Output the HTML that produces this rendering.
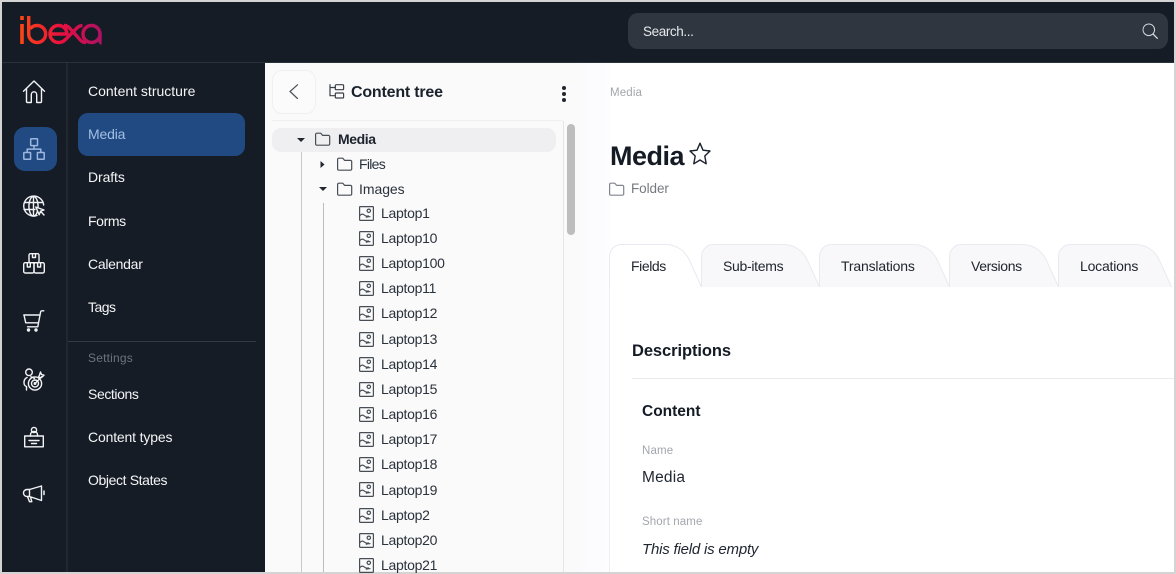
<!DOCTYPE html>
<html><head><meta charset="utf-8">
<style>
html,body{margin:0;padding:0;width:1176px;height:574px;overflow:hidden;background:#d4d4d4}
body{position:relative;font-family:"Liberation Sans","Noto Sans CJK SC",sans-serif;font-size:14px;-webkit-font-smoothing:antialiased}
div,span,svg{position:absolute}
.t{white-space:nowrap;line-height:20px;height:20px;transform:translateY(-10px)}
.n{color:#f4f5f6;left:88px;font-size:14px}
.tr{color:#2a323c;font-size:14px;letter-spacing:-.28px}
.l{transform:translateY(-11px)}
.tl{color:#20262e;top:266px}
svg{overflow:visible}
.w{fill:none;stroke:#f2f3f5;stroke-width:1.4;stroke-linecap:round;stroke-linejoin:round}
.g{fill:none;stroke:#474d55;stroke-width:1.2;stroke-linejoin:round;stroke-linecap:round}
</style></head><body>
<svg width="0" height="0" style="left:0;top:0"><defs>
<linearGradient id="lg" gradientUnits="userSpaceOnUse" x1="20" y1="0" x2="102" y2="0"><stop offset="0" stop-color="#ff4713"/><stop offset=".5" stop-color="#e8103f"/><stop offset="1" stop-color="#ae1164"/></linearGradient>
<g id="fo"><path d="M.6 3.2V12a1.2 1.2 0 0 0 1.2 1.2h11.7a1.2 1.2 0 0 0 1.2-1.2V4.6a1.2 1.2 0 0 0-1.2-1.2H7.6L5.8 1.2H1.8A1.2 1.2 0 0 0 .6 2.4z"/></g>
<g id="im"><rect x=".6" y=".6" width="13.8" height="13.8" rx=".6"/><circle cx="9.8" cy="4.8" r="1.7"/><path d="M.8 9.6c1.7-1.8 3-1.9 4.400-.7 1.500 1.300 2.500 1.500 4.300 1.100M7.300 11.200c1.200-.4 2.300-.6 3.700-.5"/></g>
</defs></svg>

<!-- app frame -->
<div style="left:2px;top:2px;width:1172px;height:570px;background:#fff"></div>
<div style="left:2px;top:2px;width:1172px;height:60px;background:#151c26"></div>
<div style="left:2px;top:62px;width:1172px;height:1px;background:#2b323c"></div>
<div style="left:2px;top:63px;width:263px;height:509px;background:#151c26"></div>
<div style="left:66px;top:63px;width:2px;height:509px;background:#20272f"></div>

<!-- logo -->
<svg style="left:0;top:0" width="120" height="60" fill="none" stroke="url(#lg)" stroke-width="3.400">
<path d="M22 16v4M22 24v20" stroke-width="3.600"/>
<path d="M28.700 16V34a8.500 8.500 0 1 0 8.500-8.500c-3 0-5.500 1.200-7 3.500"/>
<path d="M50.500 34H67a8.500 8.500 0 0 0-8.500-8.500 8.500 8.500 0 0 0 0 17c3 0 5-1 7-3L75 30c2-2.500 4-4.500 7.500-4.500"/>
<path d="M64 25.500c3 0 4.500 1.500 6 3L79 38.500c2 2.500 3.500 4 7 4"/>
<circle cx="91.500" cy="34" r="8.500"/><path d="M100 34v6c0 2 .5 3 1.500 3"/>
</svg>

<!-- search -->
<div style="left:628px;top:13px;width:540px;height:36px;border-radius:10px;background:#2f3640"></div>
<div class="t" style="left:643px;top:32px;color:#e6e8ea;font-size:13.500px;letter-spacing:-.4px">Search...</div>
<svg style="left:1142px;top:23px" width="16" height="16" fill="none" stroke="#d8dadd" stroke-width="1"><circle cx="6.800" cy="6.800" r="5.800"/><path d="M11 11l4.300 4.300" stroke-linecap="round" stroke-width="1.300"/></svg>

<!-- icon rail -->
<div style="left:14px;top:127px;width:43px;height:44px;border-radius:11px;background:#214a82"></div>
<svg class="w" style="left:23px;top:80px" width="22" height="24"><path d="M.5 11.300L11 1l10.500 10.300M3.500 9v12.500a1 1 0 0 0 1 1h3.800v-8a2.700 2.700 0 0 1 5.400 0v8h3.800a1 1 0 0 0 1-1V9"/></svg>
<svg style="left:23px;top:138px;fill:none;stroke:#9cb8de;stroke-width:1.500;stroke-linejoin:round" width="22" height="22"><rect x="7.700" y=".8" width="6.800" height="6.800" rx=".5"/><rect x=".8" y="14.500" width="6.800" height="6.800" rx=".5"/><rect x="14.400" y="14.500" width="6.800" height="6.800" rx=".5"/><path d="M11 7.600v3.500M4.200 14.500V11.100h13.600v3.400"/></svg>
<svg class="w" style="left:23px;top:196px" width="22" height="22"><path d="M14 19.500A10 10 0 1 1 20.700 9"/><ellipse cx="10.500" cy="10.300" rx="4.600" ry="9.800"/><path d="M10.500.5v19.500M1.500 6.500h18M1 13.500h11"/><path d="M12.800 11l8.200 3-3.500 1.200-1.300 3.600zM17.500 15.200l3.500 3.800" fill="#151c26"/></svg>
<svg class="w" style="left:23px;top:253px" width="22" height="21"><rect x="6" y=".7" width="10" height="9" rx="1.500"/><rect x=".7" y="9.700" width="10.300" height="10.300" rx="1.500"/><rect x="11" y="9.700" width="10.300" height="10.300" rx="1.500"/><path d="M9.500 1v3.500h3V1M4.300 10v4h3v-4M14.600 10v4h3v-4"/></svg>
<svg class="w" style="left:23px;top:310px" width="22" height="22"><path d="M20.800.8h-2c-.8 0-1 .5-1.200 1.200l-2.800 14.800H4.500M.8 5h16.300M1 5l1.700 7.800h12.400"/><circle cx="5.500" cy="20" r="1" fill="#f2f3f5"/><circle cx="13" cy="20" r="1" fill="#f2f3f5"/></svg>
<svg class="w" style="left:23px;top:368px" width="22" height="24"><circle cx="6" cy="4.300" r="3.300"/><path d="M4 9.500C1.800 10.500.9 12.500 1 15c.1 2 1 3 2.500 3.500v3.500M7.800 8.800c1.800 0 2.600 1 3.600 1.700"/><circle cx="12" cy="15.500" r="6.600"/><circle cx="12" cy="15.500" r="3.500"/><circle cx="12" cy="15.500" r=".8"/><path d="M12 15.500l7-7M16.500 7l1-3 1 2.500 2.500.7-2.500 2.300-3-.2z"/></svg>
<svg class="w" style="left:24px;top:426px" width="20" height="22"><circle cx="10" cy="4" r="2.600"/><path d="M6.500 10V8.500a3.500 3 0 0 1 7 0V10"/><rect x=".7" y="10" width="18.600" height="10.800"/><path d="M5 14.500h10M7.500 17.500h5"/></svg>
<svg class="w" style="left:23px;top:485px" width="22" height="18"><path d="M6.500 4.500L18.500 1v14.500L6.500 11.500H4a3.500 3.500 0 0 1 0-7zM6.500 4.500v7M4.500 11.500l2 5.200h2.300l-1.300-4.700"/><path d="M21 6v3.500" stroke-width="1.500"/></svg>

<!-- nav -->
<div style="left:78px;top:113px;width:167px;height:43px;border-radius:10px;background:#214a82"></div>
<div class="t n" style="top:91px">Content structure</div>
<div class="t n" style="top:134px;color:#a3bfe4;letter-spacing:-.18px">Media</div>
<div class="t n" style="top:177px;letter-spacing:-.1px">Drafts</div>
<div class="t n" style="top:221px;letter-spacing:-.38px">Forms</div>
<div class="t n" style="top:264px;letter-spacing:-.28px">Calendar</div>
<div class="t n" style="top:307px;letter-spacing:-.53px">Tags</div>
<div style="left:68px;top:341px;width:188px;height:1px;background:#333a44"></div>
<div class="t" style="left:88px;top:358px;color:#6e747c;font-size:12px;letter-spacing:.2px">Settings</div>
<div class="t n" style="top:394px;letter-spacing:-.4px">Sections</div>
<div class="t n" style="top:437px;letter-spacing:-.16px">Content types</div>
<div class="t n" style="top:480px;letter-spacing:-.38px">Object States</div>

<!-- tree panel -->
<div style="left:265px;top:63px;width:315px;height:509px;background:#fafafa"></div>
<div style="left:272px;top:70px;width:42px;height:42px;border:1px solid #eff0f2;border-radius:10px;background:#fbfbfb"></div>
<svg style="left:289px;top:84px;fill:none;stroke:#4a5058;stroke-width:1.200" width="10" height="16"><path d="M8.500.8L1 7.500l7.500 7" stroke-linecap="round"/></svg>
<svg class="g" style="left:329px;top:84px;stroke:#3a414a" width="16" height="15"><path d="M1 .7v11h5.300M1 3.500h5.300"/><rect x="6.300" y=".7" width="8.300" height="5" rx="1"/><rect x="6.300" y="9" width="8.300" height="5" rx="1"/></svg>
<div class="t" style="left:351px;top:93px;color:#1b222c;font-size:16px;font-weight:bold;letter-spacing:-.2px">Content tree</div>
<div style="left:562px;top:86px;width:4px;height:4px;border-radius:2px;background:#20262e"></div>
<div style="left:562px;top:92px;width:4px;height:4px;border-radius:2px;background:#20262e"></div>
<div style="left:562px;top:98px;width:4px;height:4px;border-radius:2px;background:#20262e"></div>
<div style="left:272px;top:120px;width:291px;height:1px;background:#efeff0"></div>
<div style="left:563px;top:121px;width:1px;height:451px;background:#e6e6e6"></div>
<div style="left:567px;top:124px;width:8px;height:111px;border-radius:4px;background:#bdbdbd"></div>
<div style="left:272px;top:128px;width:284px;height:24px;border-radius:9px;background:#efeff2"></div>
<div style="left:301px;top:152px;width:1px;height:420px;background:#c9c9c9"></div>
<div style="left:323px;top:203px;width:1px;height:369px;background:#bdbdbd"></div>

<svg style="left:297px;top:138px;fill:#22272e" width="8" height="5"><path d="M0 0h8L4 4z"/></svg>
<svg style="left:320px;top:161px;fill:#22272e" width="5" height="8"><path d="M.5 0v7l4-3.500z"/></svg>
<svg style="left:319px;top:187px;fill:#22272e" width="8" height="5"><path d="M0 0h8L4 4z"/></svg>
<svg class="g" style="left:315px;top:132px" width="16" height="15"><use href="#fo"/></svg>
<svg class="g" style="left:337px;top:157px" width="16" height="15"><use href="#fo"/></svg>
<svg class="g" style="left:337px;top:182px" width="16" height="15"><use href="#fo"/></svg>
<div class="t" style="left:338px;top:139px;color:#1b222c;font-weight:bold;letter-spacing:-.4px">Media</div>
<div class="t tr" style="left:359px;top:164px;letter-spacing:-.7px">Files</div>
<div class="t tr" style="left:359px;top:189px;letter-spacing:-.05px">Images</div>

<svg class="g" style="left:359px;top:206px" width="15" height="15"><use href="#im"/></svg><div class="t tr l" style="left:381px;top:214px">Laptop1</div>
<svg class="g" style="left:359px;top:231px" width="15" height="15"><use href="#im"/></svg><div class="t tr l" style="left:381px;top:239px">Laptop10</div>
<svg class="g" style="left:359px;top:256px" width="15" height="15"><use href="#im"/></svg><div class="t tr l" style="left:381px;top:264px">Laptop100</div>
<svg class="g" style="left:359px;top:281px" width="15" height="15"><use href="#im"/></svg><div class="t tr l" style="left:381px;top:289px">Laptop11</div>
<svg class="g" style="left:359px;top:306px" width="15" height="15"><use href="#im"/></svg><div class="t tr l" style="left:381px;top:314px">Laptop12</div>
<svg class="g" style="left:359px;top:332px" width="15" height="15"><use href="#im"/></svg><div class="t tr l" style="left:381px;top:340px">Laptop13</div>
<svg class="g" style="left:359px;top:357px" width="15" height="15"><use href="#im"/></svg><div class="t tr l" style="left:381px;top:365px">Laptop14</div>
<svg class="g" style="left:359px;top:382px" width="15" height="15"><use href="#im"/></svg><div class="t tr l" style="left:381px;top:390px">Laptop15</div>
<svg class="g" style="left:359px;top:407px" width="15" height="15"><use href="#im"/></svg><div class="t tr l" style="left:381px;top:415px">Laptop16</div>
<svg class="g" style="left:359px;top:432px" width="15" height="15"><use href="#im"/></svg><div class="t tr l" style="left:381px;top:440px">Laptop17</div>
<svg class="g" style="left:359px;top:457px" width="15" height="15"><use href="#im"/></svg><div class="t tr l" style="left:381px;top:465px">Laptop18</div>
<svg class="g" style="left:359px;top:482px" width="15" height="15"><use href="#im"/></svg><div class="t tr l" style="left:381px;top:491px">Laptop19</div>
<svg class="g" style="left:359px;top:508px" width="15" height="15"><use href="#im"/></svg><div class="t tr l" style="left:381px;top:516px">Laptop2</div>
<svg class="g" style="left:359px;top:533px" width="15" height="15"><use href="#im"/></svg><div class="t tr l" style="left:381px;top:541px">Laptop20</div>
<svg class="g" style="left:359px;top:558px" width="15" height="15"><use href="#im"/></svg><div class="t tr l" style="left:381px;top:566px">Laptop21</div>

<!-- main -->
<div style="left:580px;top:63px;width:30px;height:509px;background:linear-gradient(90deg,#fbfbfe,#fdfdff)"></div>
<div class="t" style="left:610px;top:93px;color:#a2a6ac;font-size:11.500px;letter-spacing:.15px">Media</div>
<div class="t" style="left:610px;top:156px;color:#141b25;font-size:27px;font-weight:bold;letter-spacing:-.5px">Media</div>
<svg style="left:689px;top:142px;fill:none;stroke:#1b222c;stroke-width:1.400;stroke-linejoin:round" width="22" height="24"><path d="M11 1.200l3 7 7 .8-5.200 5 1.400 7.800L11 18l-6.200 3.800L6.200 14 1 9l7-.8z"/></svg>
<svg class="g" style="left:609px;top:182px;stroke:#80858c" width="16" height="15"><use href="#fo"/></svg>
<div class="t" style="left:631px;top:189px;color:#757a81;font-size:13.500px;letter-spacing:-.08px">Folder</div>

<!-- tabs -->
<svg style="left:600px;top:240px" width="576" height="50">
<g fill="#f8f8fa" stroke="#e9e9f0" stroke-width="1">
<path d="M101.500 47V16.500a12 12 0 0 1 12-12h69c13 0 21 7 25 16l12 26.500"/>
<path d="M219.500 47V16.500a12 12 0 0 1 12-12h81c13 0 21 7 25 16l12 26.500"/>
<path d="M349.500 47V16.500a12 12 0 0 1 12-12h60c13 0 21 7 25 16l12 26.500"/>
<path d="M458.500 47V16.500a12 12 0 0 1 12-12h64c13 0 21 7 25 16l12 26.500"/>
<path d="M9.500 50V16.500a12 12 0 0 1 12-12h43c13 0 21 7 25 16l12 26.500" fill="#fff"/>
</g>
<rect x="10" y="46" width="88" height="5" fill="#fff"/>
</svg>
<div style="left:610px;top:287px;width:564px;height:285px;background:#fff;"></div>
<div style="left:609px;top:287px;width:1px;height:285px;background:#eeeef5"></div>
<div class="t tl" style="left:631px;letter-spacing:-.42px">Fields</div>
<div class="t tl" style="left:723px;letter-spacing:-.3px">Sub-items</div>
<div class="t tl" style="left:841px;letter-spacing:-.17px">Translations</div>
<div class="t tl" style="left:971px;letter-spacing:-.37px">Versions</div>
<div class="t tl" style="left:1080px;letter-spacing:-.2px">Locations</div>

<div class="t" style="left:632px;top:351px;color:#141b25;font-size:16.500px;font-weight:bold;letter-spacing:-.08px">Descriptions</div>
<div style="left:632px;top:378px;width:542px;height:1px;background:#ebebed"></div>
<div class="t" style="left:642px;top:412px;color:#141b25;font-size:15.500px;font-weight:bold">Content</div>
<div class="t" style="left:642px;top:451px;color:#a2a6ac;font-size:11.500px;letter-spacing:.15px">Name</div>
<div class="t" style="left:642px;top:478px;color:#1f2630;font-size:15.500px;letter-spacing:.2px">Media</div>
<div class="t" style="left:642px;top:522px;color:#a2a6ac;font-size:11.500px;letter-spacing:.1px">Short name</div>
<div class="t" style="left:642px;top:550px;color:#1f2630;font-size:15px;font-style:italic;letter-spacing:-.2px">This field is empty</div>
</body></html>
